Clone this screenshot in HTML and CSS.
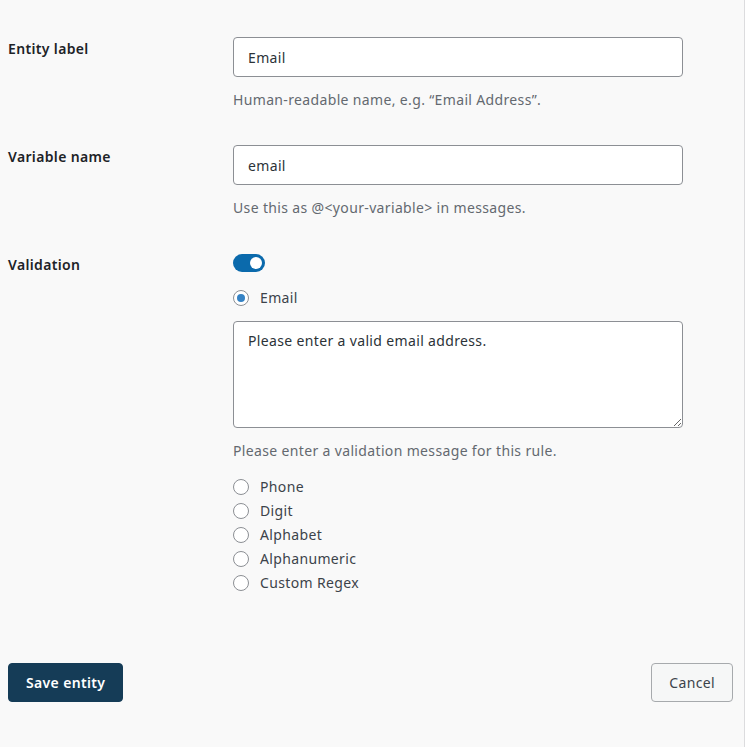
FILE: index.html
```html
<!DOCTYPE html>
<html lang="en">
<head>
  <meta charset="UTF-8" />
  <meta name="viewport" content="width=device-width, initial-scale=1" />
  <title>Edit entity</title>
  <link rel="stylesheet" href="styles.css">
</head>
<body>

<div class="page">

  <div class="field">
    <label class="field-label" for="entityLabel">Entity label</label>
    <div class="field-control">
      <input type="text" id="entityLabel" class="text-input" value="Email" />
      <p class="description">Human-readable name, e.g. “Email Address”.</p>
    </div>
  </div>

  <div class="field">
    <label class="field-label" for="variableName">Variable name</label>
    <div class="field-control">
      <input type="text" id="variableName" class="text-input" value="email" />
      <p class="description">Use this as @&lt;your-variable&gt; in messages.</p>
    </div>
  </div>

  <div class="field">
    <span class="field-label">Validation</span>
    <div class="field-control">
      <span class="toggle is-on"><span class="toggle-knob"></span></span>

      <label class="radio first">
        <input type="radio" name="rule" checked />
        <span>Email</span>
      </label>

      <textarea class="message-input">Please enter a valid email address.</textarea>
      <p class="description">Please enter a validation message for this rule.</p>

      <div class="radio-list">
        <label class="radio"><input type="radio" name="rule" /><span>Phone</span></label>
        <label class="radio"><input type="radio" name="rule" /><span>Digit</span></label>
        <label class="radio"><input type="radio" name="rule" /><span>Alphabet</span></label>
        <label class="radio"><input type="radio" name="rule" /><span>Alphanumeric</span></label>
        <label class="radio"><input type="radio" name="rule" /><span>Custom Regex</span></label>
      </div>
    </div>
  </div>

  <!-- footer actions -->
  <div class="actions">
    <button class="btn btn-primary">Save entity</button>
    <button class="btn btn-secondary">Cancel</button>
  </div>

</div>

</body>
</html>
```

FILE: styles.css
```css
* {
  margin: 0;
  padding: 0;
  box-sizing: border-box;
}

body {
  font-family: "Segoe UI", "Noto Sans", sans-serif;
  font-size: 14px;
  line-height: 20px;
  letter-spacing: 0.35px;
  color: #1d2327;
  background: #fff;
}

.page {
  width: 745px;
  min-height: 747px;
  background: #f9f9f9;
  border-right: 1px solid #dcdcde;
  padding: 37px 11px 0 8px;
}

.field {
  display: grid;
  grid-template-columns: 225px 450px;
  margin-bottom: 35px;
}

.field-label {
  font-weight: 600;
  padding-top: 2px;
  color: #1d2327;
}

.field-control {
  display: flex;
  flex-direction: column;
  align-items: flex-start;
}

.text-input {
  width: 450px;
  height: 40px;
  padding: 0 14px;
  border: 1px solid #8c8f94;
  border-radius: 4px;
  background: #fff;
  font-family: inherit;
  font-size: 14px;
  letter-spacing: inherit;
  color: #2c3338;
}

.description {
  margin-top: 13px;
  color: #646970;
}

/* toggle switch */
.toggle {
  display: flex;
  align-items: center;
  justify-content: flex-end;
  width: 32px;
  height: 18px;
  margin-top: 1px;
  padding: 0 3px;
  border-radius: 9px;
  background: #0b6aac;
}

.toggle-knob {
  width: 12px;
  height: 12px;
  border-radius: 50%;
  background: #fff;
}

/* radios */
.radio {
  display: flex;
  align-items: center;
  gap: 11px;
  height: 24px;
  color: #3c434a;
}

.radio.first {
  margin-top: 14px;
}

.radio input {
  appearance: none;
  width: 16px;
  height: 16px;
  border: 1px solid #8c8f94;
  border-radius: 50%;
  background: #fff;
  display: flex;
  align-items: center;
  justify-content: center;
}

.radio input:checked::before {
  content: "";
  width: 8px;
  height: 8px;
  border-radius: 50%;
  background: #3582c4;
}

.message-input {
  width: 450px;
  height: 107px;
  margin-top: 11px;
  padding: 9px 14px;
  border: 1px solid #8c8f94;
  border-radius: 4px;
  background: #fff;
  font-family: inherit;
  font-size: 14px;
  line-height: 20px;
  letter-spacing: inherit;
  color: #2c3338;
  resize: vertical;
}

.radio-list {
  margin-top: 14px;
}

/* footer buttons */
.actions {
  display: flex;
  justify-content: space-between;
  margin-top: 68px;
}

.btn {
  height: 39px;
  padding: 0 17px;
  border-radius: 4px;
  font-family: inherit;
  font-size: 14px;
  letter-spacing: inherit;
  cursor: pointer;
}

.btn-primary {
  background: #153c57;
  border: 1px solid #153c57;
  color: #fff;
  font-weight: 600;
}

.btn-secondary {
  background: #f6f7f7;
  border: 1px solid #a7aaad;
  color: #3c434a;
}
```
